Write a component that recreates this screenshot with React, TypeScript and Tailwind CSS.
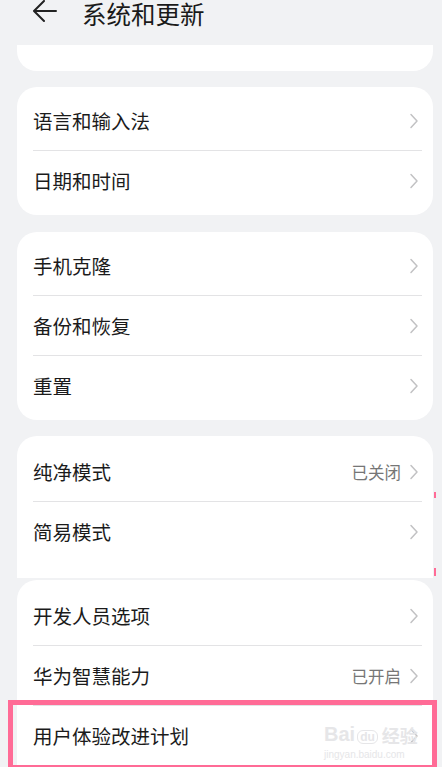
const font = { fontFamily: '"Noto Sans CJK SC", "Noto Sans", sans-serif' }

function Chevron() {
  return (
    <svg width="10" height="16" viewBox="0 0 10 16" className="shrink-0">
      <polyline points="2,1.5 8,8 2,14.5" fill="none" stroke="#c2c2c4" strokeWidth="1.5" strokeLinecap="round" strokeLinejoin="round" />
    </svg>
  )
}

type Item = { label: string; value?: string }

function Row({ item, divider }: { item: Item; divider: boolean }) {
  return (
    <div className="relative flex h-[60px] items-center pl-[16px] pr-[14px]">
      <span className="flex-1 text-[19.5px] text-[#1b1b1b]">{item.label}</span>
      {item.value && <span className="mr-[8px] text-[16.5px] text-[#767676]">{item.value}</span>}
      <Chevron />
      {divider && <div className="absolute bottom-0 left-[16px] right-[11px] h-px bg-[#e3e3e5]" />}
    </div>
  )
}

function Card({ items, className }: { items: Item[]; className: string }) {
  return (
    <div className={`ml-[17px] mr-[9px] bg-white ${className}`}>
      {items.map((it, i) => (
        <Row key={it.label} item={it} divider={i < items.length - 1} />
      ))}
    </div>
  )
}

export default function App() {
  return (
    <main className="relative h-[767px] w-[442px] overflow-hidden bg-[#f1f2f4]" style={font}>
      <header className="flex h-[45px] items-start pt-[1px]">
        <svg width="26" height="24" viewBox="0 0 26 24" className="ml-[32px] -mt-[1px]">
          <path d="M24 11H2.5M12 1L2 11l10 10" fill="none" stroke="#222" strokeWidth="2" strokeLinecap="round" strokeLinejoin="round" />
        </svg>
        <h1 className="ml-[24px] text-[24.5px] leading-[26px] font-normal text-[#1a1a1a]">系统和更新</h1>
      </header>

      <div className="ml-[17px] mr-[9px] h-[26px] rounded-b-[20px] bg-white" />

      <Card className="mt-[16px] rounded-[20px] py-[4px]" items={[{ label: '语言和输入法' }, { label: '日期和时间' }]} />

      <Card
        className="mt-[17px] rounded-[20px] py-[4px]"
        items={[{ label: '手机克隆' }, { label: '备份和恢复' }, { label: '重置' }]}
      />

      <div className="relative">
        <Card
          className="mt-[16px] rounded-t-[20px] pt-[6px] pb-[16px]"
          items={[{ label: '纯净模式', value: '已关闭' }, { label: '简易模式' }]}
        />
        <div className="absolute right-[6px] top-[56px] h-[6px] w-[2px] bg-[#ff6b96]" />
        <div className="absolute right-[6px] top-[132px] h-[8px] w-[2px] bg-[#ff6b96]" />
      </div>

      <Card
        className="mt-[2px] rounded-t-[20px] pt-[6px]"
        items={[{ label: '开发人员选项' }, { label: '华为智慧能力', value: '已开启' }, { label: '用户体验改进计划' }]}
      />

      <div className="absolute left-[8px] top-[700px] h-[70px] w-[429px] border-[5px] border-[#ff6b96]" />

      <div className="absolute left-[324px] top-[724px] flex flex-col items-start leading-none text-[#e6e6e8]">
        <div className="flex items-end gap-[2px]">
          <span className="text-[20px] font-bold" style={{ fontFamily: '"Liberation Sans", sans-serif' }}>
            Bai
          </span>
          <span className="rounded-[6px] border border-[#e6e6e8] px-[2px] text-[12px] font-bold" style={{ fontFamily: '"Liberation Sans", sans-serif' }}>
            du
          </span>
          <span className="ml-[2px] text-[18px] font-bold">经验</span>
        </div>
        <span className="mt-[6px] text-[10px]" style={{ fontFamily: '"Liberation Sans", sans-serif' }}>
          jingyan.baidu.com
        </span>
      </div>
    </main>
  )
}
